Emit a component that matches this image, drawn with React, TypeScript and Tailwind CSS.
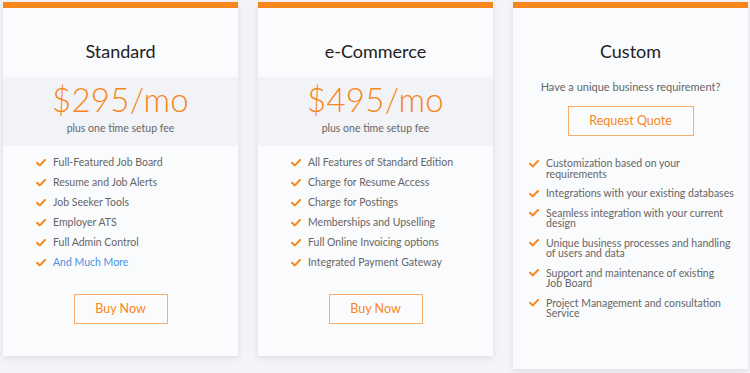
import type { ReactNode } from "react";

const ORANGE = "#f7861b";

type Plan = {
  name: string;
  price: string;
  features: { text: string; link?: boolean }[];
};

const PLANS: Plan[] = [
  {
    name: "Standard",
    price: "$295/mo",
    features: [
      { text: "Full-Featured Job Board" },
      { text: "Resume and Job Alerts" },
      { text: "Job Seeker Tools" },
      { text: "Employer ATS" },
      { text: "Full Admin Control" },
      { text: "And Much More", link: true },
    ],
  },
  {
    name: "e-Commerce",
    price: "$495/mo",
    features: [
      { text: "All Features of Standard Edition" },
      { text: "Charge for Resume Access" },
      { text: "Charge for Postings" },
      { text: "Memberships and Upselling" },
      { text: "Full Online Invoicing options" },
      { text: "Integrated Payment Gateway" },
    ],
  },
];

// lines split as the original wraps them
const CUSTOM_FEATURES: string[][] = [
  ["Customization based on your", "requirements"],
  ["Integrations with your existing databases"],
  ["Seamless integration with your current", "design"],
  ["Unique business processes and handling", "of users and data"],
  ["Support and maintenance of existing", "Job Board"],
  ["Project Management and consultation", "Service"],
];

function Check({ className = "" }: { className?: string }) {
  return (
    <svg
      width="10"
      height="8"
      viewBox="0 0 10 8"
      fill="none"
      className={`shrink-0 ${className}`}
    >
      <path
        d="M1 3.8 L3.8 6.4 L9 1"
        stroke={ORANGE}
        strokeWidth="2"
        strokeLinecap="round"
        strokeLinejoin="round"
      />
    </svg>
  );
}

function Card({ children }: { children: ReactNode }) {
  return (
    <div className="w-[235px] shrink-0 border-t-[6px] border-[#f7861b] bg-[#fafbfc] shadow-[0_2px_6px_rgba(20,30,60,0.10)]">
      {children}
    </div>
  );
}

function Title({ children }: { children: ReactNode }) {
  return (
    <h2 className="pt-[31px] pb-[14px] text-center text-[18px] leading-[24px] text-[#222]">
      {children}
    </h2>
  );
}

function OutlineButton({ label, width }: { label: string; width: string }) {
  return (
    <button
      className={`${width} mx-auto flex h-[30px] items-center justify-center border border-[#f9ad66] text-[12.5px] text-[#f7861b]`}
    >
      {label}
    </button>
  );
}

function PlanCard({ plan }: { plan: Plan }) {
  return (
    <Card>
      <Title>{plan.name}</Title>
      <div className="bg-[#f2f3f7] pt-[4px] pb-[11px] text-center">
        <div className="text-[33px] font-light leading-[37px] tracking-[0.3px] text-[#f7861b]">
          {plan.price}
        </div>
        <div className="mt-[3px] text-[10.5px] leading-[14px] text-[#666]">
          plus one time setup fee
        </div>
      </div>
      <ul className="pt-[7px] pl-[33px]">
        {plan.features.map((f) => (
          <li
            key={f.text}
            className="flex h-[20px] items-center gap-[7px] text-[10.5px]"
          >
            <Check />
            <span className={f.link ? "text-[#4a90e2]" : "text-[#666]"}>
              {f.text}
            </span>
          </li>
        ))}
      </ul>
      <div className="pt-[21px] pb-[32px]">
        <OutlineButton label="Buy Now" width="w-[94px]" />
      </div>
    </Card>
  );
}

function CustomCard() {
  return (
    <Card>
      <Title>Custom</Title>
      <p className="pt-[3px] text-center text-[11px] leading-[14px] text-[#666]">
        Have a unique business requirement?
      </p>
      <div className="pt-[12px]">
        <OutlineButton label="Request Quote" width="w-[126px]" />
      </div>
      <ul className="flex flex-col gap-[9px] pt-[22px] pr-[8px] pb-[50px] pl-[16px]">
        {CUSTOM_FEATURES.map((lines) => (
          <li
            key={lines[0]}
            className="flex items-start gap-[7px] text-[10.5px]"
          >
            <Check className="mt-[1.5px]" />
            <span className="flex flex-col leading-[10.5px] whitespace-nowrap text-[#666]">
              {lines.map((l) => (
                <span key={l}>{l}</span>
              ))}
            </span>
          </li>
        ))}
      </ul>
    </Card>
  );
}

export default function App() {
  return (
    <div
      className="min-h-[373px] w-[750px] overflow-hidden bg-[#f3f4f8] pt-[2px] pl-[3px]"
      style={{ fontFamily: "Lato, 'Noto Sans', sans-serif" }}
    >
      <div className="flex items-start gap-[20px]">
        {PLANS.map((p) => (
          <PlanCard key={p.name} plan={p} />
        ))}
        <CustomCard />
      </div>
    </div>
  );
}
